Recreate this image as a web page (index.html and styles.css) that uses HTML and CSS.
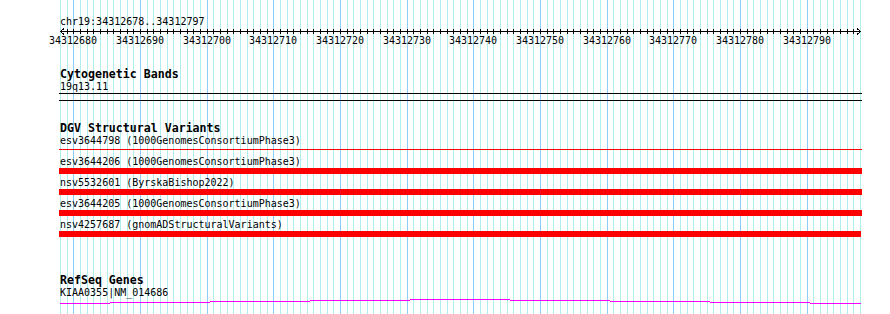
FILE: index.html
```html
<!DOCTYPE html>
<html lang="en">
<head>
    <meta charset="UTF-8">
    <meta name="viewport" content="width=device-width, initial-scale=1.0">
    <title>chr19:34312678..34312797</title>
    <link rel="stylesheet" href="styles.css">
</head>
<body>

<div class="browser">
    <svg id="grid" class="grid" width="803" height="314"></svg>

    <div class="track ruler">
        <div class="ref-label">chr19:34312678..34312797</div>
        <svg id="ruler" class="ruler-scale" width="803" height="19"></svg>
    </div>

    <div class="track">
        <div class="track-title">Cytogenetic Bands</div>
        <div class="feature-label">19q13.11</div>
        <div class="band"></div>
    </div>

    <div class="track">
        <div class="track-title">DGV Structural Variants</div>
        <div class="sv-row">
            <div class="feature-label">esv3644798 (1000GenomesConsortiumPhase3)</div>
            <div class="sv-bar thin"></div>
        </div>
        <div class="sv-row">
            <div class="feature-label">esv3644206 (1000GenomesConsortiumPhase3)</div>
            <div class="sv-bar"></div>
        </div>
        <div class="sv-row">
            <div class="feature-label">nsv5532601 (ByrskaBishop2022)</div>
            <div class="sv-bar"></div>
        </div>
        <div class="sv-row">
            <div class="feature-label">esv3644205 (1000GenomesConsortiumPhase3)</div>
            <div class="sv-bar"></div>
        </div>
        <div class="sv-row">
            <div class="feature-label">nsv4257687 (gnomADStructuralVariants)</div>
            <div class="sv-bar" style="width: 802px"></div>
        </div>
    </div>

    <div class="track genes">
        <div class="track-title">RefSeq Genes</div>
        <div class="feature-label">KIAA0355|NM_014686</div>
        <svg id="intron" class="intron" width="803" height="6"></svg>
    </div>
</div>

<script>
    const NS = 'http://www.w3.org/2000/svg';
    const START = 34312678;
    const BASES = 120;

    // x of a base inside the panel (800px for 120 bases)
    function baseX(i) {
        return 1 + Math.round(i * 800 / BASES) + 0.5;
    }

    function add(svg, tag, attrs, text) {
        const el = document.createElementNS(NS, tag);
        for (const key in attrs) el.setAttribute(key, attrs[key]);
        if (text) el.textContent = text;
        svg.appendChild(el);
        return el;
    }

    function drawGrid() {
        const grid = document.getElementById('grid');
        for (let i = 0; i <= BASES; i++) {
            const major = (START + i) % 10 === 0;
            add(grid, 'line', {
                x1: baseX(i), y1: 0, x2: baseX(i), y2: 314,
                class: major ? 'grid-major' : 'grid-minor'
            });
        }
    }

    function drawRuler() {
        const ruler = document.getElementById('ruler');
        add(ruler, 'line', { x1: 1, y1: 3.5, x2: 802, y2: 3.5, class: 'axis' });
        // arrow heads
        add(ruler, 'polyline', { points: '5,0.5 1.5,3.5 5,6.5', class: 'axis' });
        add(ruler, 'polyline', { points: '798,0.5 801.5,3.5 798,6.5', class: 'axis' });

        for (let i = 1; i < BASES; i++) {
            add(ruler, 'line', { x1: baseX(i), y1: 1, x2: baseX(i), y2: 6, class: 'axis' });
            if ((START + i) % 10 === 0) {
                add(ruler, 'text', { x: baseX(i) - 0.5, y: 16, class: 'tick-label' }, String(START + i));
            }
        }
    }

    function drawIntron() {
        // the intron line climbs one pixel every 15 bases towards the middle
        const intron = document.getElementById('intron');
        const steps = [
            [1, 51, 4], [51, 151, 3], [151, 251, 2], [251, 351, 1], [351, 451, 0],
            [451, 551, 1], [551, 651, 2], [651, 751, 3], [751, 802, 4]
        ];
        steps.forEach(([x1, x2, y]) => {
            add(intron, 'line', { x1: x1, y1: y + 0.5, x2: x2, y2: y + 0.5, class: 'intron-line' });
        });
    }

    drawGrid();
    drawRuler();
    drawIntron();
</script>

</body>
</html>
```

FILE: styles.css
```css
body {
    margin: 0;
    background-color: #ffffff;
    font-family: "DejaVu Sans Mono", "Liberation Mono", monospace;
    font-size: 10px;
    color: #000000;
    overflow: hidden;
}
.browser {
    position: relative;
    width: 803px;
    height: 314px;
    margin-left: 59px;
}
.grid {
    position: absolute;
    left: 0;
    top: 0;
    shape-rendering: crispEdges;
}
.grid-minor {
    stroke: #aeeeee;
    stroke-width: 1;
}
.grid-major {
    stroke: #87cefa;
    stroke-width: 1;
}
.track {
    position: relative;
    margin-top: 21px;
}
.ruler {
    margin-top: 0;
    padding-top: 15px;
}
.ref-label {
    line-height: 13px;
    padding-left: 1px;
}
.ruler-scale {
    display: block;
    overflow: visible;
    shape-rendering: crispEdges;
}
.axis {
    stroke: #000000;
    stroke-width: 1;
    fill: none;
}
.tick-label {
    font-family: "DejaVu Sans Mono", monospace;
    font-size: 10px;
    text-anchor: middle;
    fill: #000000;
}
.track-title {
    font-size: 11.6px;
    font-weight: bold;
    line-height: 12px;
    padding-left: 1px;
}
.feature-label {
    line-height: 13px;
    padding-left: 1px;
    white-space: nowrap;
}
.band {
    height: 8px;
    box-sizing: border-box;
    border-top: 1px solid #000000;
    border-bottom: 1px solid #000000;
}
.sv-row {
    height: 21px;
}
.sv-bar {
    width: 803px;
    height: 6px;
    background-color: #ff0000;
}
.sv-bar.thin {
    height: 1px;
    margin-top: 2px;
}
.genes {
    margin-top: 35px;
}
.intron {
    display: block;
    shape-rendering: crispEdges;
}
.intron-line {
    stroke: #ff00ff;
    stroke-width: 1;
}
```
